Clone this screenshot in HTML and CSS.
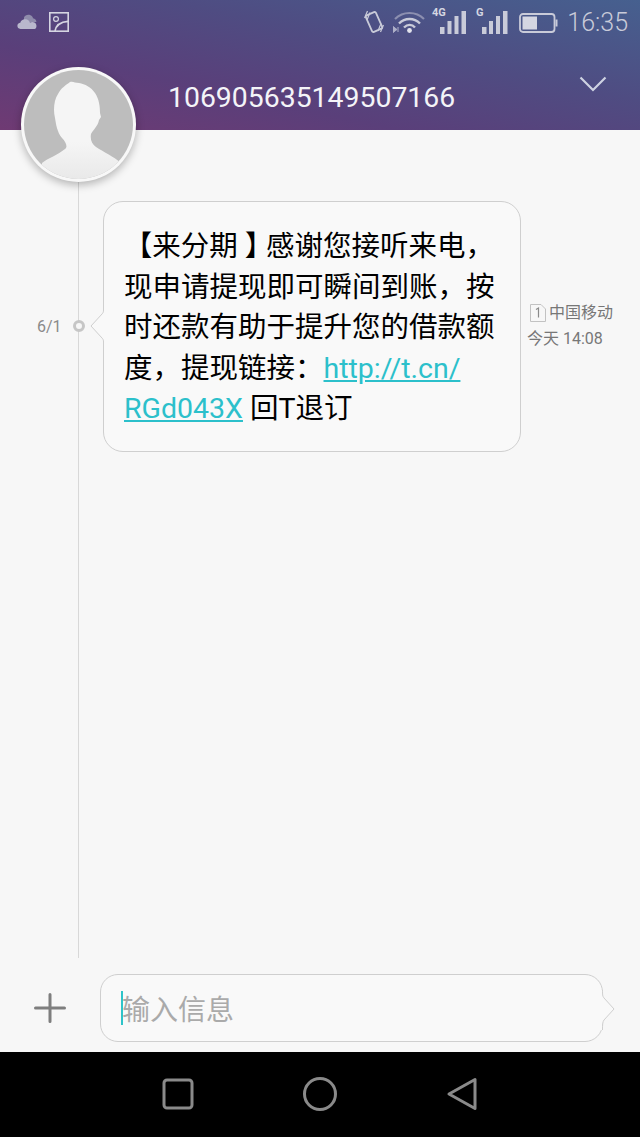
FILE: index.html
```html
<!DOCTYPE html>
<html lang="zh-CN">
<head>
  <meta charset="UTF-8" />
  <meta name="viewport" content="width=device-width, initial-scale=1.0"/>
  <title>106905635149507166</title>
  <link rel="stylesheet" href="styles.css">
</head>
<body>
  <div class="phone">
    <header class="header">
      <div class="status-bar">
        <svg class="icon-cloud" width="20" height="16" viewBox="0 0 20 16">
          <path d="M7 3.500C8 1 11 .2 13.500 1.200 15 1.800 15.800 3 16 4.200 18 4.500 19.500 6 19.400 8H7z" fill="#8f8cab"/>
          <path d="M3.500 15C1.500 15 .2 13.400.4 11.600.6 9.800 2 8.800 3.300 8.800 3.800 6.400 6 5 8.400 5.200 10.800 5.400 12.400 6.800 13 8.600 14 7.800 16.500 7.600 18 8.800 19.400 10 19.800 12 19.200 13.400 18.800 14.400 18 15 16.800 15z" fill="#b9b8cd"/>
        </svg>
        <svg class="icon-gallery" width="20" height="20" viewBox="0 0 20 20" fill="none" stroke="#d5d5e2" stroke-width="1.600">
          <rect x=".8" y=".8" width="18.400" height="18.400"/>
          <circle cx="7" cy="7" r="2.400" stroke-width="1.200"/>
          <path d="M6 19C7 13.500 11 10 19 9.400"/>
        </svg>

        <div class="status-right">
          <svg class="icon-vibrate" width="20" height="24" viewBox="0 0 20 24" fill="none" stroke="#c9cbd9">
            <rect x="4.500" y="3" width="11" height="18" rx="1.500" stroke-width="1.800" transform="rotate(-24 10 12)"/>
            <path d="M.5 8 3.500 1M3 10 6 2.500M19.500 15l-3 7M17 13.500l-3 7.500" stroke-width="1.200"/>
          </svg>
          <svg class="icon-wifi" width="32" height="24" viewBox="0 0 32 24" fill="none">
            <path d="M2 9C10 1 23 1 31 9" stroke="#8c8fb0" stroke-width="2.200"/>
            <path d="M6 13.500C12 7.500 21 7.500 27 13.500" stroke="#c9cbd9" stroke-width="2.400"/>
            <path d="M11 17.500C14.500 14 19 14 22 17.500" stroke="#c9cbd9" stroke-width="2.400"/>
            <circle cx="16.500" cy="20.500" r="2.400" fill="#e2e3ec"/>
            <path d="M0 16.500 4 19.500 0 22.500zM5 17v5" fill="#aeb0c8" stroke="#aeb0c8"/>
          </svg>
          <svg class="icon-signal" width="36" height="28" viewBox="0 0 36 28">
            <text class="net-label" x="1" y="10">4G</text>
            <path d="M9 21h4.500v7H9zM16.500 15h4v13h-4zM23.500 10h4v18h-4zM30.500 5h4.500v23h-4.500z" fill="#c9cbd9"/>
          </svg>
          <svg class="icon-signal-g" width="33" height="28" viewBox="0 0 33 28">
            <text class="net-label" x="1" y="10">G</text>
            <path d="M7 21h4.500v7H7zM14 15h4v13h-4zM21 10h4v18h-4zM28 5h4.500v23H28z" fill="#c9cbd9"/>
          </svg>
          <svg class="icon-battery" width="39" height="20" viewBox="0 0 39 20" fill="none">
            <rect x="1" y="1" width="34.500" height="18" rx="3" stroke="#c9cbd9" stroke-width="1.800"/>
            <rect x="3.500" y="3.500" width="14.500" height="13" fill="#d4d6e2"/>
            <path d="M37.500 6.500v7" stroke="#c9cbd9" stroke-width="2"/>
          </svg>
          <span class="clock">16:35</span>
        </div>
      </div>

      <div class="title-row">
        <span class="contact-number">106905635149507166</span>
        <svg class="chevron" width="28" height="16" viewBox="0 0 28 16" fill="none" stroke="#ced3e2" stroke-width="2.200">
          <path d="M1.500 1.500 14 14 26.500 1.500"/>
        </svg>
      </div>
    </header>

    <!-- contact photo sits across the header edge -->
    <div class="avatar">
      <svg width="109" height="109" viewBox="24 70 109 109">
        <defs>
          <clipPath id="avatarClip"><circle cx="78.500" cy="124.500" r="54.500"/></clipPath>
          <linearGradient id="personFill" x1="0" y1="0" x2="0" y2="1">
            <stop offset="0.600" stop-color="#f5f5f5"/>
            <stop offset="1" stop-color="#e8e8e8"/>
          </linearGradient>
        </defs>
        <g clip-path="url(#avatarClip)">
          <rect x="24" y="70" width="109" height="109" fill="#bdbdbd"/>
          <path d="M70 82C73 81 75 83 79 83 85 84 91 87 95 93 99 99 100 106 100 113L101 117 99 120C98 126 93 130 91 134 90 140 92 144 96 147 104 152 114 157 120 162V182H42V163C48 158 58 155 65 149 68 147 66 142 62 138 57 132 56 124 55 118 53 110 54 100 58 94 61 88 66 85 70 82Z" fill="url(#personFill)"/>
        </g>
      </svg>
    </div>

    <main class="thread">
      <div class="rail">
        <div class="date-mark">
          <span class="date">6/1</span>
          <span class="dot"></span>
        </div>
      </div>

      <div class="message-row">
        <div class="bubble">
          <svg class="bubble-tail" width="15" height="32" viewBox="0 0 15 32">
            <path d="M15 0H13.500C13.500 2 13 3 12 4L1 16 12 28C13 29 13.500 30 13.500 32H15Z" fill="#f9f9f9"/>
            <path d="M13.500 0C13.500 2 13 3 12 4L1 16 12 28C13 29 13.500 30 13.500 32" fill="none" stroke="#cfcfcf"/>
          </svg>
          <span class="bracket-open">【</span>来分期 <span class="bracket-close">】</span>感谢您接听来电，<br>
          现申请提现即可瞬间到账，按<br>
          时还款有助于提升您的借款额<br>
          度，提现链接：<a class="link" href="#">http://t.cn/</a><br>
          <a class="link" href="#">RGd043X</a> 回T退订
        </div>
        <div class="meta">
          <div class="carrier">
            <svg width="16" height="18" viewBox="0 0 16 18" fill="none" stroke="#c2c2c2">
              <path d="M.5.500H11L15.500 5V17.500H.5Z"/>
              <path d="M6 5.500 8.500 4V13.500" stroke="#8a8a8a" stroke-width="1.200"/>
            </svg>
            中国移动
          </div>
          <div>今天 14:08</div>
        </div>
      </div>
    </main>

    <footer class="composer">
      <svg class="add-button" width="32" height="30" viewBox="0 0 32 30" stroke="#7e7e7e" stroke-width="3" stroke-linecap="round">
        <path d="M1.500 15H30.500M16 1.500V28.500"/>
      </svg>
      <div class="input-box">
        <span class="caret"></span>
        <span class="placeholder">输入信息</span>
        <svg class="input-tail" width="14" height="40" viewBox="0 0 14 40">
          <path d="M0 0H1.500C1.500 5 1.500 6 3 8L13 19 3 30C1.500 32 1.500 35 1.500 40H0Z" fill="#f9f9f9"/>
          <path d="M1.500 0C1.500 5 1.500 6 3 8L13 19 3 30C1.500 32 1.500 35 1.500 40" fill="none" stroke="#cfcfcf"/>
        </svg>
      </div>
    </footer>

    <nav class="nav-bar">
      <svg width="32" height="32" viewBox="0 0 32 32" fill="none" stroke="#8a8a8a" stroke-width="3">
        <rect x="2" y="2" width="28" height="28" rx="3"/>
      </svg>
      <svg width="36" height="36" viewBox="0 0 36 36" fill="none" stroke="#8a8a8a" stroke-width="3">
        <circle cx="18" cy="18" r="15.500"/>
      </svg>
      <svg width="32" height="34" viewBox="0 0 32 34" fill="none" stroke="#8a8a8a" stroke-width="3" stroke-linejoin="round">
        <path d="M29 2.500V31.500L3 17Z"/>
      </svg>
    </nav>
  </div>
</body>
</html>
```

FILE: styles.css
```css
* {
  box-sizing: border-box;
}

body {
  margin: 0;
  font-family: Roboto, "Noto Sans CJK SC", sans-serif;
}

.phone {
  position: relative;
  display: flex;
  flex-direction: column;
  width: 640px;
  height: 1137px;
  background-color: #f7f7f7;
}

/* Header */
.header {
  height: 130px;
  background: linear-gradient(12deg, #6f3a73 0%, #5a3f7a 32%, #4f4c82 62%, #46608f 100%);
}

.status-bar {
  display: flex;
  align-items: flex-start;
  height: 44px;
}

.icon-cloud {
  margin: 14px 0 0 17px;
}

.icon-gallery {
  margin: 12px 0 0 12px;
}

.status-right {
  display: flex;
  align-items: flex-start;
  margin-left: auto;
}

.icon-vibrate {
  margin: 10px 0 0 0;
}

.icon-wifi {
  margin: 10px 0 0 9px;
}

.icon-signal {
  margin: 6px 0 0 6px;
}

.icon-signal-g {
  margin: 6px 0 0 8px;
}

.icon-battery {
  margin: 13px 0 0 11px;
}

.net-label {
  font-family: Roboto, sans-serif;
  font-size: 11px;
  font-weight: 700;
  fill: #d5d6e2;
}

.clock {
  margin: 8px 12px 0 9px;
  font-size: 25px;
  font-weight: 300;
  line-height: 30px;
  color: #c9cbd9;
}

.title-row {
  display: flex;
  align-items: flex-start;
  padding-left: 168px;
}

.contact-number {
  margin-top: 36px;
  font-size: 28.4px;
  line-height: 36px;
  color: #f4f4f8;
}

.chevron {
  margin: 32px 0 0 124px;
}

.avatar {
  position: absolute;
  top: 67px;
  left: 21px;
  width: 115px;
  height: 115px;
  padding: 3px;
  border-radius: 50%;
  background-color: #f8f8f8;
  box-shadow: 0 3px 9px rgba(0, 0, 0, 0.28);
}

.avatar svg {
  display: block;
}

/* Message thread */
.thread {
  display: flex;
  flex: 1;
}

.rail {
  width: 79px;
  padding-top: 187px;
  border-right: 1px solid #d8d8d8;
}

.date-mark {
  position: relative;
  height: 20px;
}

.date {
  display: block;
  margin-left: 37px;
  font-size: 16px;
  line-height: 20px;
  color: #8a8a8a;
}

.dot {
  position: absolute;
  top: 3px;
  right: -7px;
  width: 12px;
  height: 12px;
  border: 3px solid #c6c6c6;
  border-radius: 50%;
  background-color: #f7f7f7;
}

.message-row {
  display: flex;
  align-items: flex-start;
  padding: 71px 0 0 24px;
}

.bubble {
  position: relative;
  width: 418px;
  padding: 25px 16px 21px 20px;
  border: 1px solid #cfcfcf;
  border-radius: 20px;
  background-color: #f9f9f9;
  font-size: 28.5px;
  line-height: 40.5px;
  color: #000;
  white-space: nowrap;
}

.bubble-tail {
  position: absolute;
  top: 108px;
  left: -14px;
}

/* the sender tag brackets are set at half width */
.bracket-open {
  padding-left: 14px;
  font-feature-settings: "halt";
}

.bracket-close {
  margin-right: 7px;
  font-feature-settings: "halt";
}

.link {
  color: #2cc0cb;
}

.meta {
  margin: 99px 0 0 6px;
  font-size: 16px;
  line-height: 26px;
  color: #777;
  white-space: nowrap;
}

.carrier {
  display: flex;
  align-items: center;
  gap: 3px;
  margin-left: 3px;
}

/* Composer */
.composer {
  display: flex;
  align-items: flex-start;
  height: 94px;
  padding: 16px 0 0 34px;
}

.add-button {
  margin: 19px 34px 0 0;
}

.input-box {
  position: relative;
  display: flex;
  align-items: center;
  width: 503px;
  height: 68px;
  padding-left: 20px;
  border: 1px solid #cfcfcf;
  border-radius: 18px;
  background-color: #f9f9f9;
}

.caret {
  width: 2px;
  height: 34px;
  margin-right: -1px;
  background-color: #2fc4c9;
}

.placeholder {
  font-size: 28px;
  color: #aaa;
}

.input-tail {
  position: absolute;
  top: 15px;
  right: -13px;
}

/* System navigation */
.nav-bar {
  display: flex;
  align-items: center;
  justify-content: center;
  gap: 108px;
  height: 85px;
  padding-bottom: 1px;
  background-color: #000;
}
```
